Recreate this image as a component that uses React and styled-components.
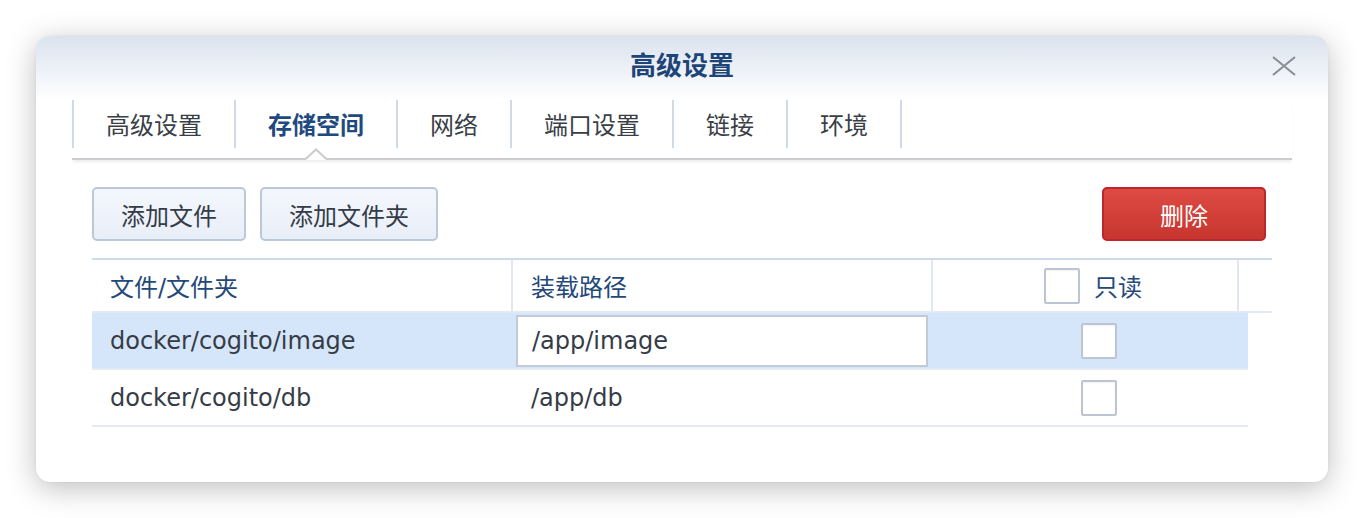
import styled, { createGlobalStyle } from 'styled-components';

const GlobalStyle = createGlobalStyle`
  html, body {
    margin: 0;
    padding: 0;
    background: #fff;
  }
  body {
    font-family: 'DejaVu Sans', 'Noto Sans CJK SC', sans-serif;
    font-size: 24px;
    color: #353c47;
  }
`;

const tabs = ['高级设置', '存储空间', '网络', '端口设置', '链接', '环境'];

const rows = [
  { source: 'docker/cogito/image', mount: '/app/image', selected: true },
  { source: 'docker/cogito/db', mount: '/app/db', selected: false },
];

export default function App() {
  return (
    <>
      <GlobalStyle />
      <Page>
        <Dialog>
          <Header>
            <Title>高级设置</Title>
            <CloseButton aria-label="close">
              <svg width="24" height="20" viewBox="0 0 24 20">
                <path d="M1 1 L23 19 M23 1 L1 19" stroke="#8a9099" strokeWidth="2.2" fill="none" />
              </svg>
            </CloseButton>
          </Header>

          <TabBar>
            {tabs.map((tab) => (
              <Tab key={tab} $active={tab === '存储空间'}>
                {tab}
              </Tab>
            ))}
          </TabBar>

          <Content>
            <Toolbar>
              <Button>添加文件</Button>
              <Button>添加文件夹</Button>
              <Spacer />
              <DangerButton>删除</DangerButton>
            </Toolbar>

            <Table>
              <HeadRow>
                <HeadCell>文件/文件夹</HeadCell>
                <HeadCell>装载路径</HeadCell>
                <HeadCell $center>
                  <Checkbox />
                  <span>只读</span>
                </HeadCell>
                <HeadCell />
              </HeadRow>

              {rows.map((row) => (
                <Row key={row.source} $selected={row.selected}>
                  <Cell>{row.source}</Cell>
                  {row.selected ? (
                    <EditCell>
                      <PathInput defaultValue={row.mount} />
                    </EditCell>
                  ) : (
                    <Cell>{row.mount}</Cell>
                  )}
                  <Cell $center>
                    <Checkbox />
                  </Cell>
                </Row>
              ))}
            </Table>
          </Content>
        </Dialog>
      </Page>
    </>
  );
}

const Page = styled.div`
  padding: 36px;
`;

const Dialog = styled.div`
  height: 446px;
  background: #fff;
  border-radius: 14px;
  box-shadow: 0 6px 30px rgba(0, 0, 0, 0.26), 0 0 2px rgba(0, 0, 0, 0.08);
  overflow: hidden;
`;

const Header = styled.div`
  position: relative;
  height: 64px;
  padding-top: 14px;
  box-sizing: border-box;
  background: linear-gradient(#dbe3ee 0%, #eef2f8 55%, #fff 100%);
  text-align: center;
`;

const Title = styled.div`
  font-size: 26px;
  line-height: 32px;
  font-weight: bold;
  color: #1e4577;
`;

const CloseButton = styled.div`
  position: absolute;
  top: 20px;
  right: 32px;
  width: 24px;
  height: 20px;
  display: flex;
`;

const TabBar = styled.div`
  display: flex;
  margin: 0 36px 0 36px;
  height: 58px;
  border-bottom: 2px solid #cbcdd0;
  box-shadow: 0 3px 3px -1px rgba(0, 0, 0, 0.08);
`;

const Tab = styled.div`
  position: relative;
  height: 46px;
  padding: 0 32px 2px;
  display: flex;
  align-items: center;
  border-right: 2px solid #cfdae7;
  color: ${({ $active }) => ($active ? '#1f4a80' : '#3a3f47')};
  font-weight: ${({ $active }) => ($active ? 'bold' : 'normal')};

  &:first-child {
    border-left: 2px solid #cfdae7;
  }

  ${({ $active }) =>
    $active &&
    `
    &::before,
    &::after {
      content: '';
      position: absolute;
      left: 50%;
      width: 0;
      height: 0;
      border-style: solid;
      border-color: transparent;
    }
    &::before {
      top: 100%;
      margin-left: -13px;
      border-width: 0 13px 12px 13px;
      border-bottom-color: #cbcdd0;
    }
    &::after {
      top: calc(100% + 2.5px);
      margin-left: -10.5px;
      border-width: 0 10.5px 9.5px 10.5px;
      border-bottom-color: #fff;
    }
  `}
`;

const Content = styled.div`
  padding: 27px 56px 0 56px;
`;

const Toolbar = styled.div`
  display: flex;
  gap: 14px;
  padding-right: 6px;
  margin-bottom: 17px;
`;

const Spacer = styled.div`
  flex: 1;
`;

const Button = styled.button`
  height: 54px;
  padding: 0 27px;
  border: 2px solid #bcc8d6;
  border-radius: 5px;
  background: linear-gradient(#f4f7fd, #e8eef8);
  font-family: inherit;
  font-size: 24px;
  color: #353c47;
  cursor: pointer;
`;

const DangerButton = styled(Button)`
  padding: 0 56px;
  border-color: #bd272b;
  background: linear-gradient(#dd4b44, #c7352f);
  color: #fff;
`;

const Table = styled.div`
  display: flex;
  flex-direction: column;
  align-items: flex-start;
`;

const HeadRow = styled.div`
  display: grid;
  grid-template-columns: 421px 420px 306px 33px;
  width: 1180px;
  height: 55px;
  border-top: 2px solid #cfdae8;
  border-bottom: 2px solid #e3eaf3;
  box-sizing: border-box;
`;

const HeadCell = styled.div`
  display: flex;
  align-items: center;
  justify-content: ${({ $center }) => ($center ? 'center' : 'flex-start')};
  gap: 14px;
  padding-left: ${({ $center }) => ($center ? '16px' : '18px')};
  border-right: 2px solid #dfe7f1;
  color: #24487a;

  &:last-child {
    border-right: none;
  }
`;

const Row = styled.div`
  display: grid;
  grid-template-columns: 421px 420px 315px;
  width: 1156px;
  height: 57px;
  border-bottom: 2px solid #e3eaf3;
  box-sizing: border-box;
  background: ${({ $selected }) => ($selected ? '#d6e6fa' : '#fff')};
`;

const Cell = styled.div`
  display: flex;
  align-items: center;
  justify-content: ${({ $center }) => ($center ? 'center' : 'flex-start')};
  padding-left: ${({ $center }) => ($center ? '16px' : '18px')};
  color: #353c47;
  white-space: nowrap;
`;

const EditCell = styled.div`
  display: flex;
  padding: 2px 5px 1px 3px;
`;

const PathInput = styled.input`
  flex: 1;
  min-width: 0;
  box-sizing: border-box;
  height: 52px;
  padding: 0 0 0 14px;
  border: 2px solid #c2cad6;
  background: #fff;
  font-family: inherit;
  font-size: 24px;
  color: #353c47;
  outline: none;
`;

const Checkbox = styled.span`
  display: inline-block;
  box-sizing: border-box;
  width: 36px;
  height: 36px;
  flex: none;
  border: 2px solid #bcc5d1;
  border-radius: 2px;
  background: #fff;
  box-shadow: inset 0 1px 2px rgba(0, 0, 0, 0.06);
`;
